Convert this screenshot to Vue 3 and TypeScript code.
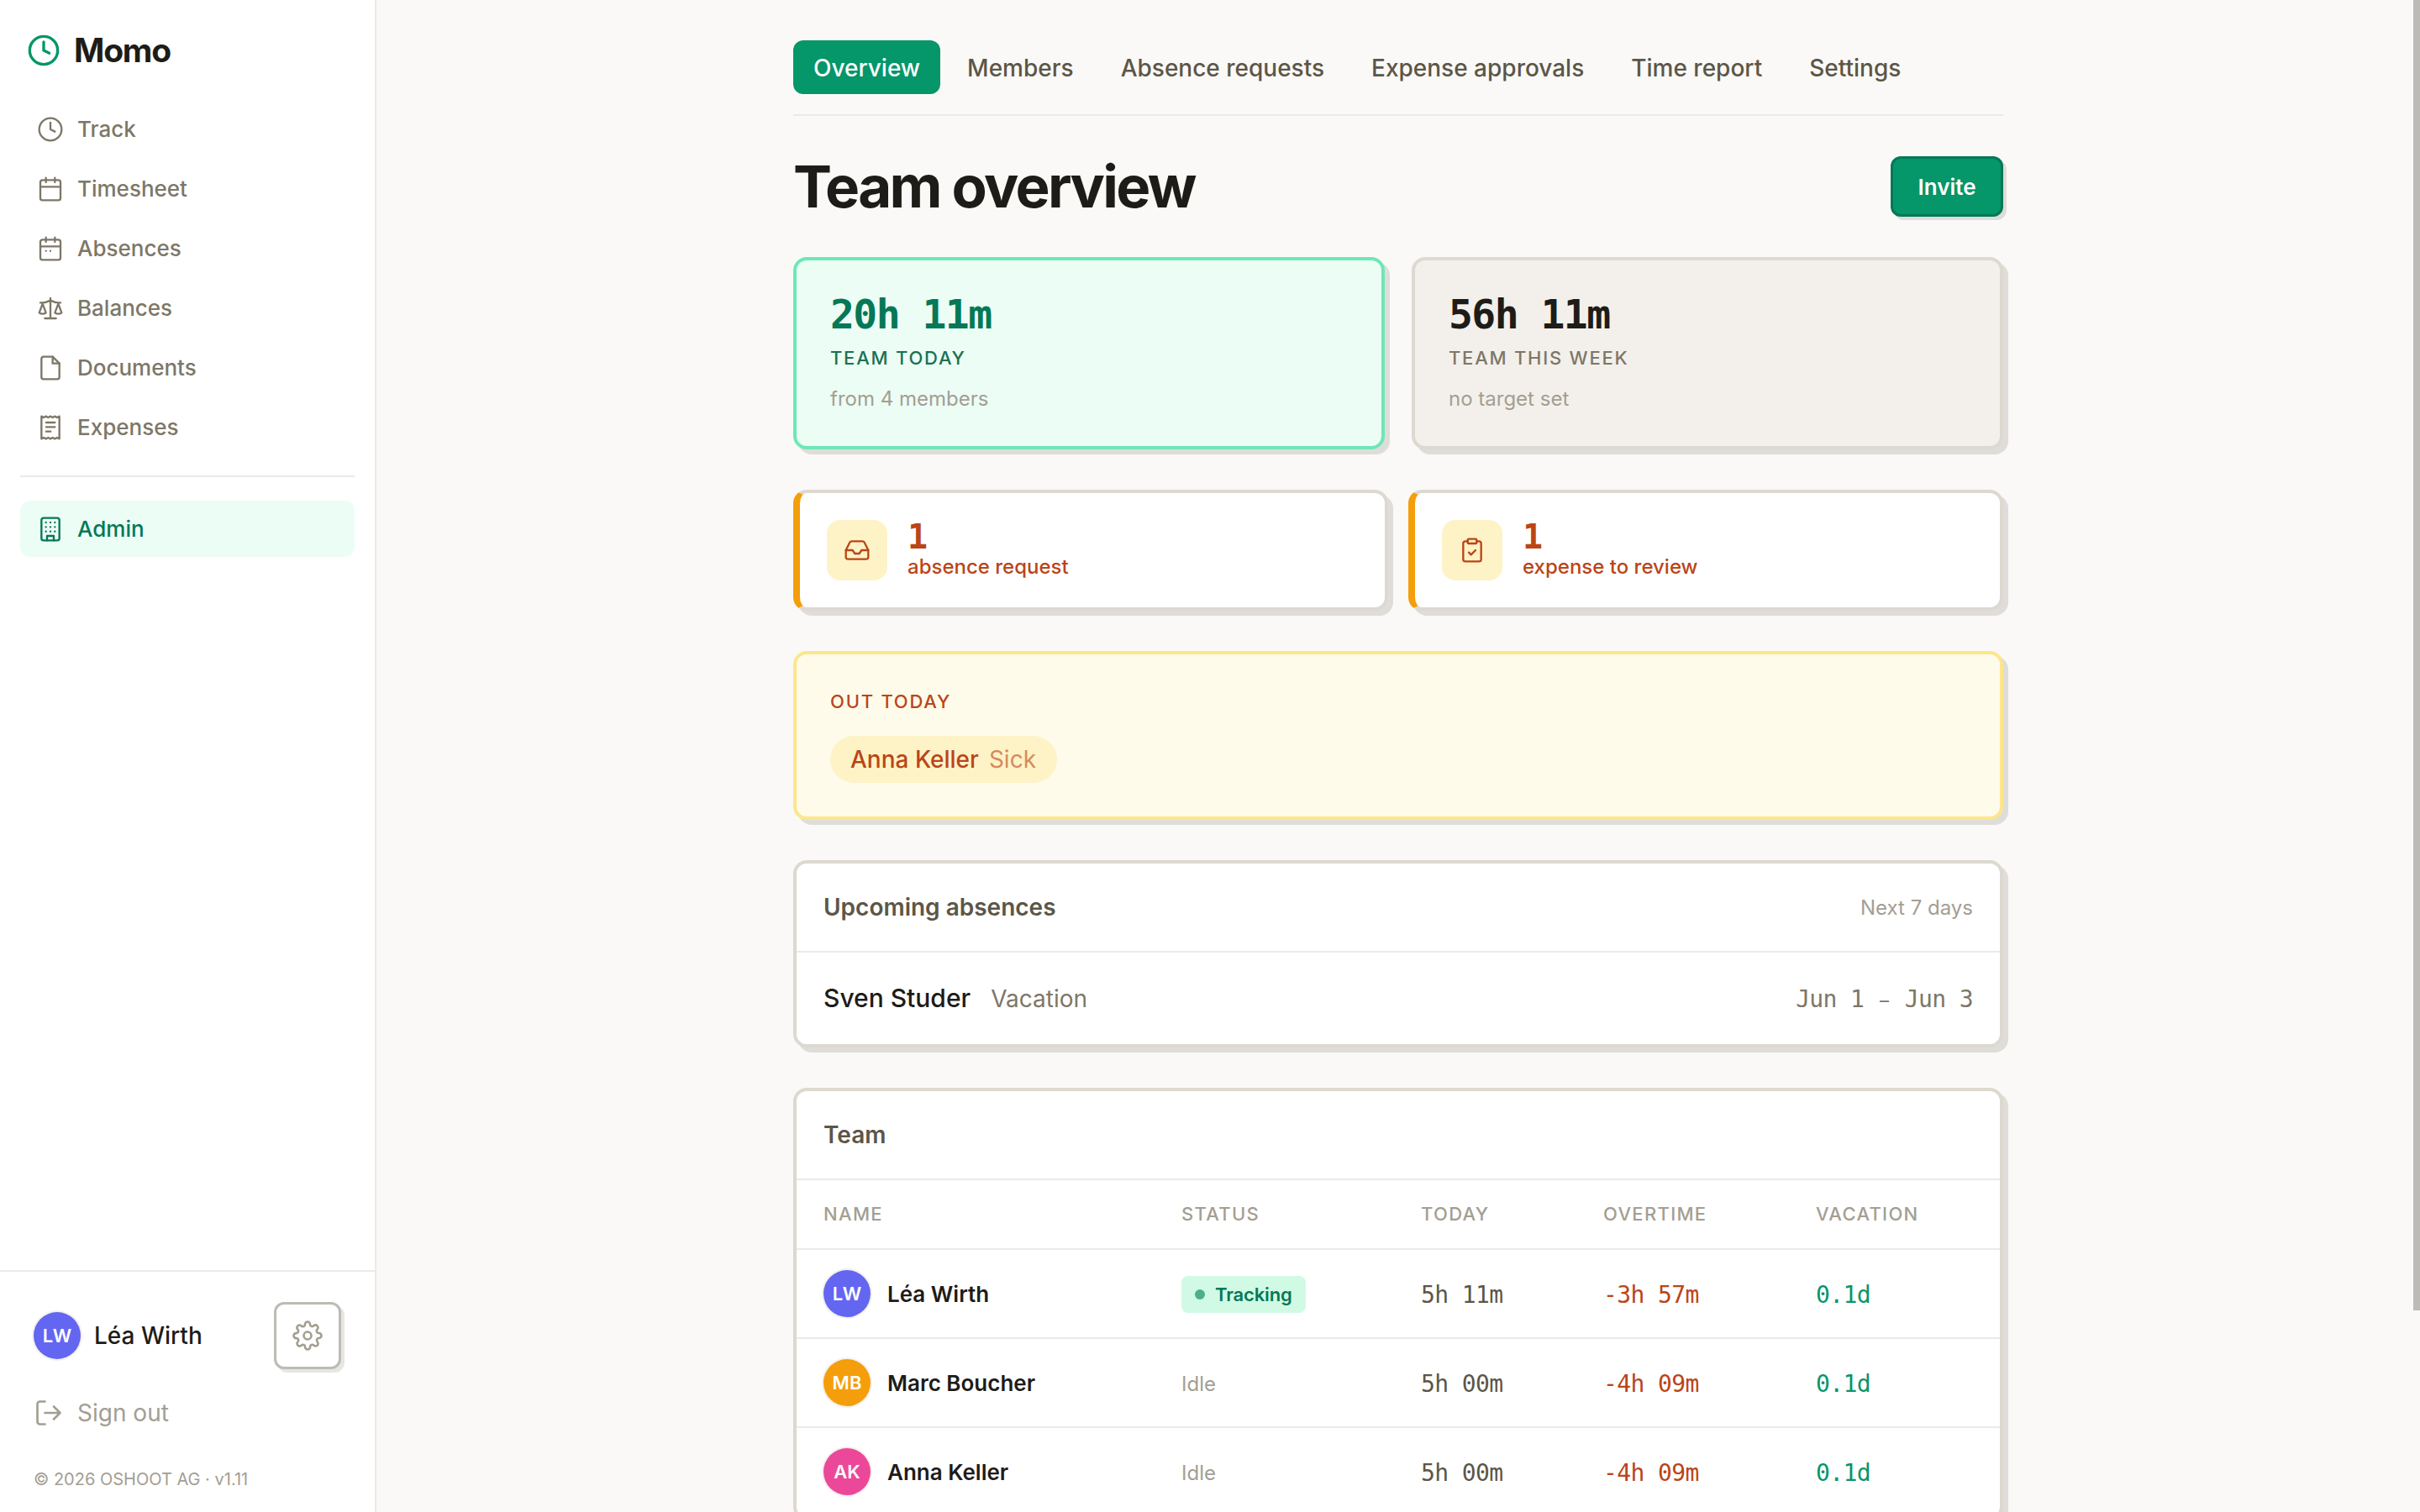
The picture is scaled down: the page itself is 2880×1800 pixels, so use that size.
<script setup lang="ts">
interface NavItem {
  label: string
  icon: string
}

interface Member {
  initials: string
  name: string
  color: string
  tracking: boolean
  today: string
  overtime: string
  vacation: string
}

const icons: Record<string, string> = {
  clock: '<circle cx="12" cy="12" r="10"/><path d="M12 6v6l4 2"/>',
  calendar: '<rect x="3" y="4" width="18" height="18" rx="2"/><path d="M8 2v4M16 2v4M3 10h18"/>',
  absences:
    '<rect x="3" y="4" width="18" height="18" rx="2"/><path d="M8 2v4M16 2v4M3 10h18M8 14h.01M12 14h.01"/>',
  scale:
    '<path d="m16 16 3-8 3 8c-.87.65-1.92 1-3 1s-2.13-.35-3-1Z"/><path d="m2 16 3-8 3 8c-.87.65-1.92 1-3 1s-2.13-.35-3-1Z"/><path d="M7 21h10M12 3v18M3 7h2c2 0 5-1 7-2 2 1 5 2 7 2h2"/>',
  file: '<path d="M14 2H6a2 2 0 0 0-2 2v16a2 2 0 0 0 2 2h12a2 2 0 0 0 2-2V8z"/><path d="M14 2v6h6"/>',
  receipt:
    '<path d="M4 2v20l2-1 2 1 2-1 2 1 2-1 2 1 2-1 2 1V2l-2 1-2-1-2 1-2-1-2 1-2-1-2 1Z"/><path d="M8.2 7.5H16M8.2 11.5H16M8.2 15.5H12.2"/>',
  building:
    '<rect x="4" y="2" width="16" height="20" rx="2"/><path d="M9 22v-4h6v4M8 6h.01M16 6h.01M12 6h.01M12 10h.01M12 14h.01M16 10h.01M16 14h.01M8 10h.01M8 14h.01"/>',
  gear: '<circle cx="12" cy="12" r="3"/><path d="M19.4 15a1.65 1.65 0 0 0 .33 1.82l.06.06a2 2 0 0 1 0 2.83 2 2 0 0 1-2.83 0l-.06-.06a1.65 1.65 0 0 0-1.82-.33 1.65 1.65 0 0 0-1 1.51V21a2 2 0 0 1-2 2 2 2 0 0 1-2-2v-.09A1.65 1.65 0 0 0 9 19.4a1.65 1.65 0 0 0-1.82.33l-.06.06a2 2 0 0 1-2.83 0 2 2 0 0 1 0-2.83l.06-.06a1.65 1.65 0 0 0 .33-1.82 1.65 1.65 0 0 0-1.51-1H3a2 2 0 0 1-2-2 2 2 0 0 1 2-2h.09A1.65 1.65 0 0 0 4.6 9a1.65 1.65 0 0 0-.33-1.82l-.06-.06a2 2 0 0 1 0-2.83 2 2 0 0 1 2.83 0l.06.06a1.65 1.65 0 0 0 1.82.33H9a1.65 1.65 0 0 0 1-1.51V3a2 2 0 0 1 2-2 2 2 0 0 1 2 2v.09a1.65 1.65 0 0 0 1 1.51 1.65 1.65 0 0 0 1.82-.33l.06-.06a2 2 0 0 1 2.83 0 2 2 0 0 1 0 2.83l-.06.06a1.65 1.65 0 0 0-.33 1.82V9a1.65 1.65 0 0 0 1.51 1H21a2 2 0 0 1 2 2 2 2 0 0 1-2 2h-.09a1.65 1.65 0 0 0-1.51 1z"/>',
  logout: '<path d="M9 21H5a2 2 0 0 1-2-2V5a2 2 0 0 1 2-2h4"/><path d="M16 17l5-5-5-5M21 12H9"/>',
  inbox:
    '<path d="M22 12h-6l-2 3h-4l-2-3H2"/><path d="M5.45 5.11 2 12v6a2 2 0 0 0 2 2h16a2 2 0 0 0 2-2v-6l-3.45-6.89A2 2 0 0 0 16.76 4H7.24a2 2 0 0 0-1.79 1.11z"/>',
  clipboard:
    '<rect x="8" y="2" width="8" height="4" rx="1"/><path d="M16 4h2a2 2 0 0 1 2 2v14a2 2 0 0 1-2 2H6a2 2 0 0 1-2-2V6a2 2 0 0 1 2-2h2"/><path d="m9 14 2 2 4-4"/>',
}

const nav: NavItem[] = [
  { label: 'Track', icon: 'clock' },
  { label: 'Timesheet', icon: 'calendar' },
  { label: 'Absences', icon: 'absences' },
  { label: 'Balances', icon: 'scale' },
  { label: 'Documents', icon: 'file' },
  { label: 'Expenses', icon: 'receipt' },
]

const tabs: string[] = ['Overview', 'Members', 'Absence requests', 'Expense approvals', 'Time report', 'Settings']

const alerts = [
  { icon: 'inbox', count: 1, label: 'absence request' },
  { icon: 'clipboard', count: 1, label: 'expense to review' },
]

const members: Member[] = [
  { initials: 'LW', name: 'Léa Wirth', color: '#6366f1', tracking: true, today: '5h 11m', overtime: '-3h 57m', vacation: '0.1d' },
  { initials: 'MB', name: 'Marc Boucher', color: '#f59e0b', tracking: false, today: '5h 00m', overtime: '-4h 09m', vacation: '0.1d' },
  { initials: 'AK', name: 'Anna Keller', color: '#ec4899', tracking: false, today: '5h 00m', overtime: '-4h 09m', vacation: '0.1d' },
]
</script>

<template>
  <div class="app">
    <aside class="sidebar">
      <div class="brand">
        <svg class="icon brand-icon" viewBox="0 0 24 24" v-html="icons.clock"></svg>
        <span class="brand-name">Momo</span>
      </div>
      <nav class="nav">
        <a v-for="item in nav" :key="item.label" class="nav-item">
          <svg class="icon" viewBox="0 0 24 24" v-html="icons[item.icon]"></svg>
          <span>{{ item.label }}</span>
        </a>
        <hr class="nav-divider" />
        <a class="nav-item active">
          <svg class="icon" viewBox="0 0 24 24" v-html="icons.building"></svg>
          <span>Admin</span>
        </a>
      </nav>
      <footer class="side-footer">
        <div class="user">
          <span class="avatar self">LW</span>
          <span class="user-name">Léa Wirth</span>
          <button class="gear">
            <svg class="icon" viewBox="0 0 24 24" v-html="icons.gear"></svg>
          </button>
        </div>
        <a class="signout">
          <svg class="icon" viewBox="0 0 24 24" v-html="icons.logout"></svg>
          <span>Sign out</span>
        </a>
        <p class="copyright">© 2026 OSHOOT AG · v1.11</p>
      </footer>
    </aside>

    <main class="main">
      <div class="content">
        <nav class="tabs">
          <a v-for="(tab, i) in tabs" :key="tab" class="tab" :class="{ current: i === 0 }">{{ tab }}</a>
        </nav>

        <header class="page-header">
          <h1>Team overview</h1>
          <button class="invite">Invite</button>
        </header>

        <section class="stats">
          <div class="card stat stat-green">
            <div class="stat-value">20h 11m</div>
            <div class="stat-label">TEAM TODAY</div>
            <div class="stat-note">from 4 members</div>
          </div>
          <div class="card stat stat-plain">
            <div class="stat-value">56h 11m</div>
            <div class="stat-label">TEAM THIS WEEK</div>
            <div class="stat-note">no target set</div>
          </div>
        </section>

        <section class="alerts">
          <div v-for="a in alerts" :key="a.label" class="card alert">
            <span class="alert-icon">
              <svg class="icon" viewBox="0 0 24 24" v-html="icons[a.icon]"></svg>
            </span>
            <div>
              <div class="alert-count">{{ a.count }}</div>
              <div class="alert-label">{{ a.label }}</div>
            </div>
          </div>
        </section>

        <section class="card out">
          <div class="out-title">OUT TODAY</div>
          <span class="chip">Anna Keller<span class="chip-reason">Sick</span></span>
        </section>

        <section class="card">
          <div class="card-head">
            <h2>Upcoming absences</h2>
            <span class="card-hint">Next 7 days</span>
          </div>
          <div class="absence">
            <div>
              <span class="absence-name">Sven Studer</span>
              <span class="absence-type">Vacation</span>
            </div>
            <span class="absence-dates">Jun 1 <span class="dash">–</span> Jun 3</span>
          </div>
        </section>

        <section class="card">
          <div class="card-head"><h2>Team</h2></div>
          <div class="row row-head">
            <span>NAME</span><span>STATUS</span><span>TODAY</span><span>OVERTIME</span><span>VACATION</span>
          </div>
          <div v-for="m in members" :key="m.initials" class="row">
            <div class="member">
              <span class="avatar" :style="{ background: m.color }">{{ m.initials }}</span>
              <span class="member-name">{{ m.name }}</span>
            </div>
            <div class="status">
              <span v-if="m.tracking" class="badge"><i class="dot"></i>Tracking</span>
              <span v-else class="idle">Idle</span>
            </div>
            <span class="num">{{ m.today }}</span>
            <span class="num negative">{{ m.overtime }}</span>
            <span class="num positive">{{ m.vacation }}</span>
          </div>
        </section>
      </div>
      <div class="scrollbar"></div>
    </main>
  </div>
</template>

<style>
html,
body {
  margin: 0;
  overflow: hidden;
  background: #faf9f7;
}
</style>

<style scoped>
.app {
  display: flex;
  height: 100vh;
  overflow: hidden;
  background: #faf9f7;
  color: #1e1c18;
  font-family: Inter, 'Liberation Sans', sans-serif;
}
.app * {
  box-sizing: border-box;
}
h1,
h2,
p {
  margin: 0;
}
button {
  font-family: inherit;
  padding: 0;
}
.icon {
  display: block;
  flex: none;
  width: 32px;
  height: 32px;
  fill: none;
  stroke: currentColor;
  stroke-width: 1.75;
  stroke-linecap: round;
  stroke-linejoin: round;
}

/* Sidebar */
.sidebar {
  display: flex;
  flex-direction: column;
  flex: none;
  width: 448px;
  background: #fff;
  border-right: 2px solid #ebeae5;
}
.brand {
  display: flex;
  align-items: center;
  gap: 16px;
  height: 120px;
  padding-left: 32px;
}
.brand-icon {
  width: 40px;
  height: 40px;
  stroke-width: 2;
  color: #059669;
}
.brand-name {
  font-size: 39px;
  line-height: 48px;
  font-weight: 700;
  letter-spacing: -1.2px;
}
.nav {
  display: flex;
  flex-direction: column;
  gap: 4px;
  flex: 1;
  padding: 0 24px;
}
.nav-item {
  display: flex;
  align-items: center;
  gap: 16px;
  height: 67px;
  padding: 0 20px;
  border-radius: 12px;
  font-size: 26px;
  font-weight: 500;
  color: #7d7768;
}
.nav-item.active {
  background: #ecfdf5;
  color: #047857;
}
.nav-divider {
  width: 100%;
  height: 2px;
  margin: 20px 0 24px;
  border: 0;
  background: #ebeae5;
}
.side-footer {
  padding: 36px 40px 25px;
  border-top: 2px solid #ebeae5;
}
.user {
  display: flex;
  align-items: center;
  gap: 16px;
  height: 80px;
}
.avatar {
  display: flex;
  align-items: center;
  justify-content: center;
  flex: none;
  width: 56px;
  height: 56px;
  border-radius: 50%;
  box-shadow: 0 0 0 2px #f3f1ed;
  color: #fff;
  font-size: 22px;
  font-weight: 600;
}
.avatar.self {
  background: #6366f1;
}
.user-name {
  flex: 1;
  font-size: 28px;
  font-weight: 500;
}
.gear {
  display: flex;
  align-items: center;
  justify-content: center;
  width: 80px;
  height: 80px;
  border: 3px solid #bdbbb5;
  border-radius: 12px;
  background: #fff;
  box-shadow: 4px 4px 0 #e8e6e1;
  color: #a39e92;
}
.gear .icon,
.signout .icon {
  width: 36px;
  height: 36px;
}
.signout {
  display: flex;
  align-items: center;
  gap: 16px;
  height: 44px;
  margin-top: 30px;
  font-size: 28px;
  color: #a39e92;
}
.copyright {
  margin-top: 43px;
  font-size: 20px;
  line-height: 28px;
  color: #a39e92;
}

/* Main column */
.main {
  position: relative;
  flex: 1;
  overflow: hidden;
}
.scrollbar {
  position: absolute;
  top: 0;
  right: 0;
  width: 8px;
  height: 1560px;
  background: #bdbbb5;
}
.content {
  display: flex;
  flex-direction: column;
  gap: 48px;
  width: 1440px;
  margin: 0 auto;
  padding-top: 48px;
}
.tabs {
  display: flex;
  gap: 8px;
  padding-bottom: 24px;
  border-bottom: 2px solid #ebeae5;
}
.tab {
  height: 64px;
  padding: 0 24px;
  border-radius: 12px;
  font-size: 28px;
  line-height: 66px;
  font-weight: 500;
  color: #5c5647;
  white-space: nowrap;
}
.tab.current {
  background: #059669;
  color: #fff;
}
.page-header {
  display: flex;
  align-items: center;
  justify-content: space-between;
}
h1 {
  font-size: 69px;
  line-height: 72px;
  font-weight: 700;
  letter-spacing: -2.65px;
}
.invite {
  width: 134px;
  height: 72px;
  border: 3px solid #047857;
  border-radius: 12px;
  background: #059669;
  box-shadow: 4px 4px 0 #dfddd9;
  color: #fff;
  font-size: 26px;
  font-weight: 600;
}
.card {
  border: 4px solid #ddd9d0;
  border-radius: 16px;
  background: #fff;
  box-shadow: 6px 6px 0 #dfddd9;
}
.stats {
  display: grid;
  grid-template-columns: 1fr 1fr;
  gap: 32px;
}
.stat {
  height: 229px;
  padding: 40px;
}
.stat-green {
  border-color: #6ee7b7;
  background: #ecfdf5;
}
.stat-plain {
  background: #f3f0eb;
}
.stat-value {
  font-family: 'DejaVu Sans Mono', monospace;
  font-size: 48px;
  line-height: 48px;
  font-weight: 700;
  letter-spacing: -1.54px;
}
.stat-label {
  margin-top: 12px;
  font-size: 22px;
  line-height: 32px;
  font-weight: 500;
  letter-spacing: 1.76px;
  color: #7d7768;
}
.stat-green .stat-value {
  color: #047857;
}
.stat-green .stat-label {
  color: #1a7154;
}
.stat-note {
  margin-top: 16px;
  font-size: 24px;
  line-height: 34px;
  color: #a39e92;
}
.alerts {
  display: grid;
  grid-template-columns: 1fr 1fr;
  gap: 24px;
}
.alert {
  display: flex;
  align-items: center;
  gap: 24px;
  height: 144px;
  padding: 0 32px;
  border-left: 8px solid #f59e0b;
  color: #bb4517;
}
.alert-icon {
  display: flex;
  align-items: center;
  justify-content: center;
  width: 72px;
  height: 72px;
  border-radius: 16px;
  background: #fef3c7;
}
.alert-count {
  font-family: 'DejaVu Sans Mono', monospace;
  font-size: 40px;
  line-height: 40px;
  font-weight: 700;
  letter-spacing: -1px;
}
.alert-label {
  font-size: 24px;
  line-height: 32px;
  font-weight: 500;
}
.out {
  display: flex;
  flex-direction: column;
  align-items: flex-start;
  justify-content: space-between;
  height: 201px;
  padding: 40px;
  border-color: #fde68a;
  background: #fffbeb;
  color: #bb4517;
}
.out-title {
  font-size: 22px;
  line-height: 32px;
  font-weight: 500;
  letter-spacing: 1.76px;
}
.chip {
  height: 56px;
  padding: 0 25px 0 24px;
  border-radius: 28px;
  background: #fef3c7;
  font-size: 28px;
  line-height: 56px;
  font-weight: 500;
}
.chip-reason {
  margin-left: 12px;
  font-weight: 400;
  opacity: 0.6;
}
.card-head {
  display: flex;
  align-items: center;
  justify-content: space-between;
  height: 106px;
  padding: 0 32px;
  border-bottom: 2px solid #ebeae5;
}
h2 {
  font-size: 28px;
  font-weight: 600;
  color: #5c5647;
}
.card-hint {
  font-size: 24px;
  color: #a39e92;
}
.absence {
  display: flex;
  align-items: center;
  justify-content: space-between;
  height: 109px;
  padding: 0 32px;
}
.absence > div {
  display: flex;
  align-items: baseline;
  gap: 24px;
  padding-bottom: 2px;
}
.absence-name {
  font-size: 30px;
  font-weight: 500;
}
.absence-type {
  font-size: 28px;
  color: #7d7768;
}
.absence-dates,
.num {
  padding-top: 2px;
  font-family: 'DejaVu Sans Mono', monospace;
  font-size: 28px;
  letter-spacing: -0.62px;
  color: #7d7768;
}
.dash {
  display: inline-block;
  width: 16px;
  font-family: Inter, sans-serif;
  font-size: 22px;
  letter-spacing: 0;
  text-align: center;
}
.row {
  display: grid;
  grid-template-columns: 426px 285px 217px 253px 1fr;
  align-items: center;
  height: 106px;
  padding: 0 32px;
  border-bottom: 2px solid #ebeae5;
}
.row-head {
  height: 83px;
  padding-bottom: 1px;
  font-size: 22px;
  font-weight: 500;
  letter-spacing: 1.32px;
  color: #a39e92;
}
.member {
  display: flex;
  align-items: center;
  gap: 20px;
}
.member-name {
  font-size: 26px;
  font-weight: 600;
}
.status {
  display: flex;
  align-items: center;
  padding-top: 2px;
}
.badge {
  display: inline-flex;
  align-items: center;
  gap: 12px;
  height: 44px;
  padding: 0 16px;
  border-radius: 8px;
  background: #d1fae5;
  color: #047857;
  font-size: 22px;
  font-weight: 600;
  letter-spacing: -0.15px;
}
.dot {
  width: 12px;
  height: 12px;
  border-radius: 50%;
  background: #4caf8b;
}
.idle {
  font-size: 24px;
  color: #a39e92;
}
.num {
  color: #5c5647;
}
.num.negative {
  color: #bb4517;
}
.num.positive {
  color: #059669;
}
</style>
